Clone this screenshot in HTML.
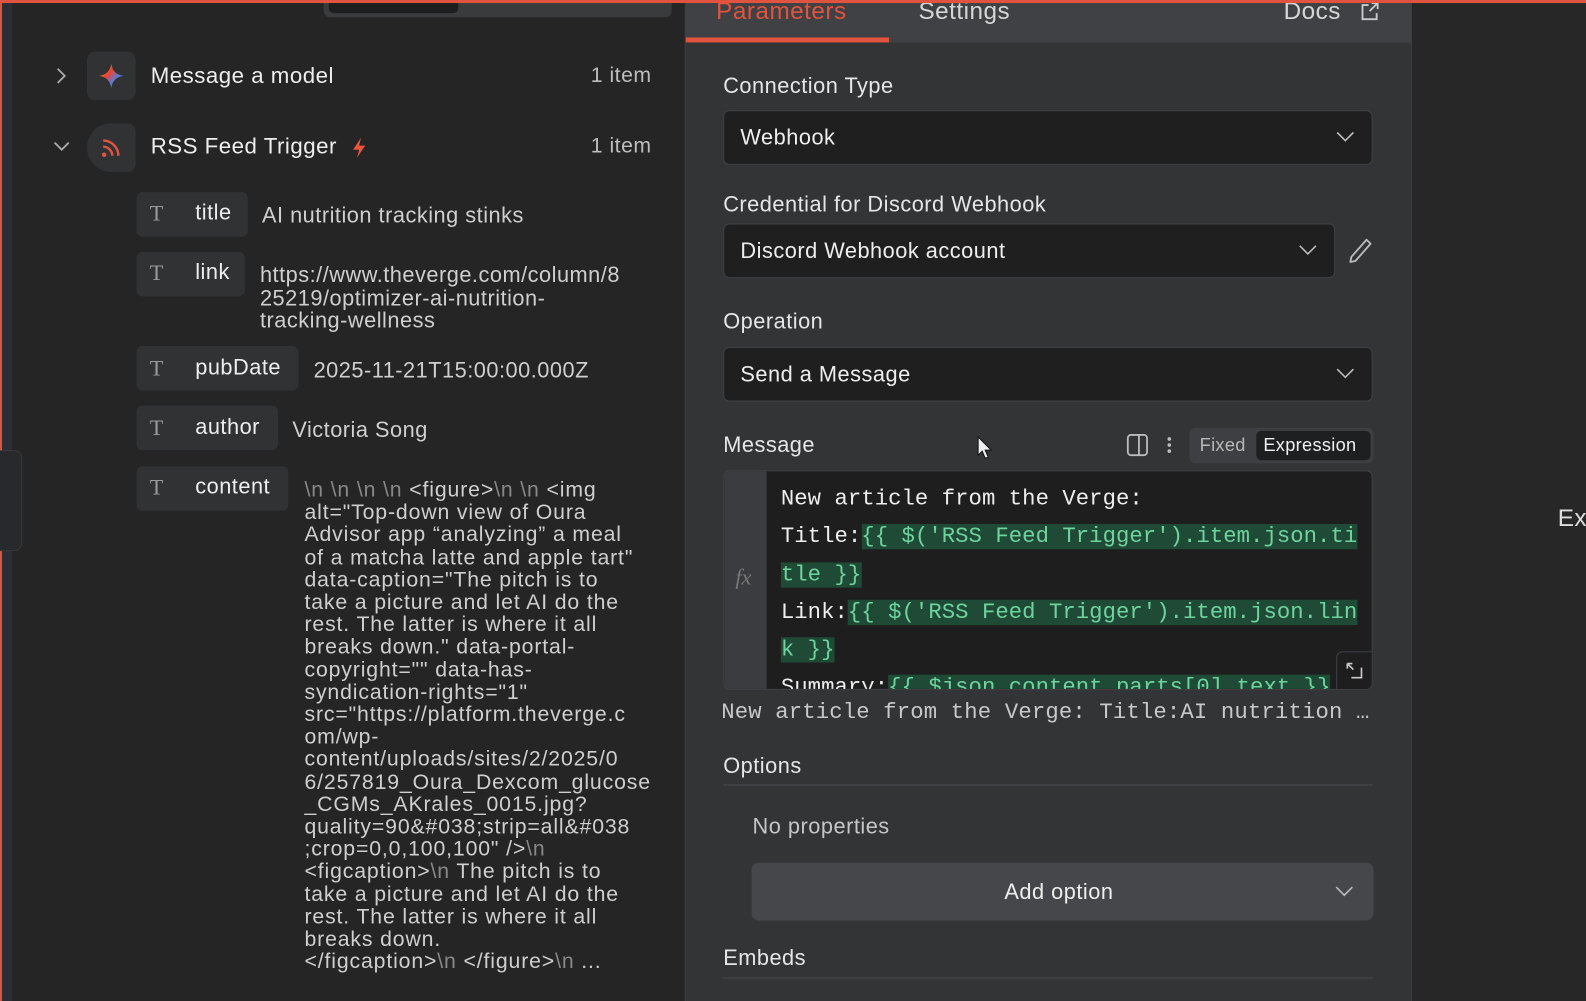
<!DOCTYPE html>
<html><head><meta charset="utf-8"><style>
*{margin:0;padding:0;box-sizing:border-box}
body{width:1586px;height:990px;overflow:hidden;background:#272728;font-family:"Liberation Sans",sans-serif;color:#e8e8e8;position:relative;letter-spacing:0.5px}
#w{position:absolute;left:0;top:0;width:1586px;height:990px;transform:scale(1.0115);transform-origin:0 0}
.a{position:absolute;white-space:nowrap}
.left{position:absolute;left:0;top:0;width:677px;height:990px;background:#252526;border-left:2px solid #e0533f}
.edge{position:absolute;left:2px;top:0;width:10px;height:990px;background:#2d2e33}
.right{position:absolute;left:677px;top:0;width:719px;height:990px;background:#323436;border-left:1px solid #3d3f42;border-right:1px solid #3d3f42}
.far{position:absolute;left:1396px;top:0;width:200px;height:990px;background:#272728}
.top{position:absolute;left:0;top:0;width:1600px;height:3px;background:#e0533f}
.pill{position:absolute;background:#313234;border-radius:6px;height:44px}
.T{position:absolute;font-family:"Liberation Serif",serif;color:#9a9a9a;font-size:22px}
.key{position:absolute;font-size:21.5px;color:#eee}
.val{position:absolute;font-size:21.5px;color:#cfcfcf;white-space:nowrap}
.lbl{position:absolute;font-size:21.5px;color:#e6e6e6}
.inp{position:absolute;background:#1f1f1f;border:1px solid #3e4043;border-radius:6px;height:54px}
.inp span{position:absolute;left:16px;top:14px;font-size:21.5px;color:#eee}
.chev{position:absolute;right:16px;top:18px}
.code{font-family:"Liberation Mono",monospace;font-size:21px}
.hl{background:#1f4a36;color:#6fd3a0}
</style></head><body><div id="w">
<div class="left"></div>
<div class="edge"></div>
<div class="a" style="left:320px;top:0;width:344px;height:17px;background:#3a3b3d;border-radius:0 0 6px 6px"></div>
<div class="a" style="left:325px;top:0;width:128px;height:13px;background:#1e1e1e;border-radius:0 0 5px 5px"></div>
<div class="a" style="left:0;top:445px;width:22px;height:100px;border:1px solid #3a3b3f;border-left:none;border-radius:0 8px 8px 0;background:#28292c"></div>

<svg class="a" style="left:54px;top:66px" width="14" height="18"><path d="M3 2l7 7-7 7" stroke="#aaa" stroke-width="1.8" fill="none"/></svg>
<div class="a" style="left:86px;top:51px;width:48px;height:48px;background:#313234;border-radius:8px"></div>
<svg class="a" style="left:97px;top:62px" width="26" height="26" viewBox="0 0 26 26"><defs><linearGradient id="g" x1="0" y1="0" x2="1" y2="1"><stop offset="0" stop-color="#f4b400"/><stop offset=".4" stop-color="#e94335"/><stop offset=".7" stop-color="#4285f4"/><stop offset="1" stop-color="#34a853"/></linearGradient></defs><path d="M13 1C14 8 18 12 25 13 18 14 14 18 13 25 12 18 8 14 1 13 8 12 12 8 13 1Z" fill="url(#g)"/></svg>
<div class="a" style="left:149px;top:62px;font-size:22px;color:#eee">Message a model</div>
<div class="a" style="left:584px;top:63px;font-size:21px;color:#bdbdbd">1 item</div>

<svg class="a" style="left:52px;top:138px" width="18" height="14"><path d="M2 3l7 7 7-7" stroke="#aaa" stroke-width="1.8" fill="none"/></svg>
<div class="a" style="left:86px;top:122px;width:48px;height:48px;background:#313234;border-radius:24px 8px 8px 24px"></div>
<svg class="a" style="left:99px;top:135px" width="22" height="22" viewBox="0 0 22 22"><circle cx="4" cy="18" r="2.2" fill="#e0533f"/><path d="M3 10a9 9 0 0 1 9 9M3 4a15 15 0 0 1 15 15" stroke="#e0533f" stroke-width="2.4" fill="none"/></svg>
<div class="a" style="left:149px;top:132px;font-size:22px;color:#eee">RSS Feed Trigger</div>
<svg class="a" style="left:346px;top:135px" width="18" height="22" viewBox="0 0 18 22"><path d="M11 1L3 13h6l-2 8 8-12H9z" fill="#e8553f"/></svg>
<div class="a" style="left:584px;top:133px;font-size:21px;color:#bdbdbd">1 item</div>

<div class="pill" style="left:135px;top:190px;width:110px"></div><div class="T" style="left:148px;top:198px">T</div><div class="key" style="left:193px;top:198px">title</div>
<div class="val" style="left:259px;top:201px">AI nutrition tracking stinks</div>
<div class="pill" style="left:135px;top:249px;width:107px"></div><div class="T" style="left:148px;top:257px">T</div><div class="key" style="left:193px;top:257px">link</div>
<div class="val" style="left:257px;top:261px;line-height:22.5px">https://www.theverge.com/column/8<br>25219/optimizer-ai-nutrition-<br>tracking-wellness</div>
<div class="pill" style="left:135px;top:342px;width:160px"></div><div class="T" style="left:148px;top:351px">T</div><div class="key" style="left:193px;top:351px">pubDate</div>
<div class="val" style="left:310px;top:354px">2025-11-21T15:00:00.000Z</div>
<div class="pill" style="left:135px;top:401px;width:140px"></div><div class="T" style="left:148px;top:410px">T</div><div class="key" style="left:193px;top:410px">author</div>
<div class="val" style="left:289px;top:413px">Victoria Song</div>
<div class="pill" style="left:135px;top:461px;width:150px"></div><div class="T" style="left:148px;top:469px">T</div><div class="key" style="left:193px;top:469px">content</div>
<div class="val" style="left:301px;top:474px;line-height:22.2px;font-size:21px;letter-spacing:0.85px"><span style="color:#888">\n \n \n \n</span> &lt;figure&gt;<span style="color:#888">\n \n</span> &lt;img<br>alt="Top-down view of Oura<br>Advisor app “analyzing” a meal<br>of a matcha latte and apple tart"<br>data-caption="The pitch is to<br>take a picture and let AI do the<br>rest. The latter is where it all<br>breaks down." data-portal-<br>copyright="" data-has-<br>syndication-rights="1"<br>src="https://platform.theverge.c<br>om/wp-<br>content/uploads/sites/2/2025/0<br>6/257819_Oura_Dexcom_glucose<br>_CGMs_AKrales_0015.jpg?<br>quality=90&amp;#038;strip=all&amp;#038<br>;crop=0,0,100,100" /&gt;<span style="color:#888">\n</span><br>&lt;figcaption&gt;<span style="color:#888">\n</span> The pitch is to<br>take a picture and let AI do the<br>rest. The latter is where it all<br>breaks down.<br>&lt;/figcaption&gt;<span style="color:#888">\n</span> &lt;/figure&gt;<span style="color:#888">\n</span> ...</div>

<div class="right"></div>
<div class="a" style="left:678px;top:0;width:717px;height:42px;background:#3f4144"></div>
<div class="a" style="left:678px;top:37px;width:201px;height:5px;background:#e0533f"></div>
<div class="a" style="left:708px;top:-2px;font-size:24px;color:#e0533f">Parameters</div>
<div class="a" style="left:908px;top:-2px;font-size:24px;color:#d6d6d6">Settings</div>
<div class="a" style="left:1269px;top:-2px;font-size:24px;color:#d6d6d6">Docs</div>
<svg class="a" style="left:1344px;top:1px" width="20" height="20" viewBox="0 0 20 20"><path d="M9 4H3v14h14v-6M12 2h6v6M18 2l-8 8" stroke="#ccc" stroke-width="1.8" fill="none"/></svg>

<div class="lbl" style="left:715px;top:73px">Connection Type</div>
<div class="inp" style="left:715px;top:109px;width:642px"><span>Webhook</span><svg class="chev" width="20" height="14"><path d="M2 3l8 8 8-8" stroke="#bbb" stroke-width="1.6" fill="none"/></svg></div>
<div class="lbl" style="left:715px;top:190px">Credential for Discord Webhook</div>
<div class="inp" style="left:715px;top:221px;width:605px"><span>Discord Webhook account</span><svg class="chev" width="20" height="14"><path d="M2 3l8 8 8-8" stroke="#bbb" stroke-width="1.6" fill="none"/></svg></div>
<svg class="a" style="left:1332px;top:234px" width="26" height="28" viewBox="0 0 26 28"><path d="M19 3l4 4L8 24l-5 1 1-5z" stroke="#bbb" stroke-width="1.8" fill="none" stroke-linejoin="round"/></svg>
<div class="lbl" style="left:715px;top:306px">Operation</div>
<div class="inp" style="left:715px;top:343px;width:642px"><span>Send a Message</span><svg class="chev" width="20" height="14"><path d="M2 3l8 8 8-8" stroke="#bbb" stroke-width="1.6" fill="none"/></svg></div>

<div class="lbl" style="left:715px;top:428px">Message</div>
<svg class="a" style="left:965px;top:431px" width="16" height="24" viewBox="0 0 16 24"><path d="M2 1v18l4-4 3 7 3-1-3-7h6z" fill="#eee" stroke="#111" stroke-width="1"/></svg>
<svg class="a" style="left:1113px;top:428px" width="24" height="24" viewBox="0 0 24 24"><rect x="2" y="2" width="19" height="20" rx="3" stroke="#bbb" stroke-width="1.8" fill="none"/><path d="M13 2v20" stroke="#bbb" stroke-width="1.8"/></svg>
<svg class="a" style="left:1151px;top:430px" width="10" height="22"><circle cx="5" cy="4" r="1.8" fill="#bbb"/><circle cx="5" cy="10" r="1.8" fill="#bbb"/><circle cx="5" cy="16" r="1.8" fill="#bbb"/></svg>
<div class="a" style="left:1176px;top:423px;width:182px;height:35px;background:#3d3f42;border-radius:6px"></div>
<div class="a" style="left:1242px;top:426px;width:113px;height:29px;background:#1e1f20;border-radius:5px"></div>
<div class="a" style="left:1186px;top:430px;font-size:18px;color:#b8b8b8;letter-spacing:0.3px">Fixed</div>
<div class="a" style="left:1249px;top:430px;font-size:18px;color:#f0f0f0;letter-spacing:0.3px">Expression</div>

<div class="a" style="left:715px;top:465px;width:642px;height:217px;background:#1e1e1f;border:1px solid #3e4043;border-radius:6px;overflow:hidden;letter-spacing:0">
 <div style="position:absolute;left:0;top:0;width:42px;height:217px;background:#3a3c3f"></div>
 <div style="position:absolute;left:11px;top:92px;font-family:'Liberation Serif',serif;font-style:italic;font-size:22px;color:#777">fx</div>
 <div class="code" style="position:absolute;left:56px;top:9px;line-height:37.3px;color:#eee;white-space:nowrap;font-size:22px;letter-spacing:0.05px">New article from the Verge:<br>Title:<span class="hl">{{ $('RSS Feed Trigger').item.json.ti</span><br><span class="hl">tle }}</span><br>Link:<span class="hl">{{ $('RSS Feed Trigger').item.json.lin</span><br><span class="hl">k }}</span><br>Summary:<span class="hl">{{ $json.content.parts[0].text }}</span></div>
 <div style="position:absolute;left:605px;top:178px;width:38px;height:40px;background:#1e1e1f;border:1px solid #3e4043;border-radius:6px 0 0 0"></div>
 <svg style="position:absolute;left:614px;top:188px" width="18" height="18" viewBox="0 0 18 18"><path d="M2 2h5M2 2v5M2 2l6 6M6 16h10V6" stroke="#ccc" stroke-width="1.6" fill="none"/></svg>
</div>
<div class="a code" style="left:713px;top:692px;color:#c8c8c8;font-size:22px;letter-spacing:0.15px">New article from the Verge: Title:AI nutrition …</div>

<div class="lbl" style="left:715px;top:745px">Options</div>
<div class="a" style="left:715px;top:775px;width:642px;height:2px;background:#3e4043"></div>
<div class="a" style="left:744px;top:805px;font-size:21.5px;color:#c6c6c6">No properties</div>
<div class="a" style="left:743px;top:853px;width:615px;height:57px;background:#45474a;border-radius:7px"></div>
<div class="a" style="left:993px;top:870px;font-size:21.5px;color:#eee">Add option</div>
<svg class="a" style="left:1319px;top:874px" width="20" height="14"><path d="M2 3l8 8 8-8" stroke="#bbb" stroke-width="1.6" fill="none"/></svg>
<div class="lbl" style="left:715px;top:935px">Embeds</div>
<div class="a" style="left:715px;top:966px;width:642px;height:2px;background:#3e4043"></div>

<div class="far"></div>
<div class="a" style="left:1540px;top:499px;font-size:24px;color:#ddd">Ex</div>
<div class="top"></div>
</div></body></html>
